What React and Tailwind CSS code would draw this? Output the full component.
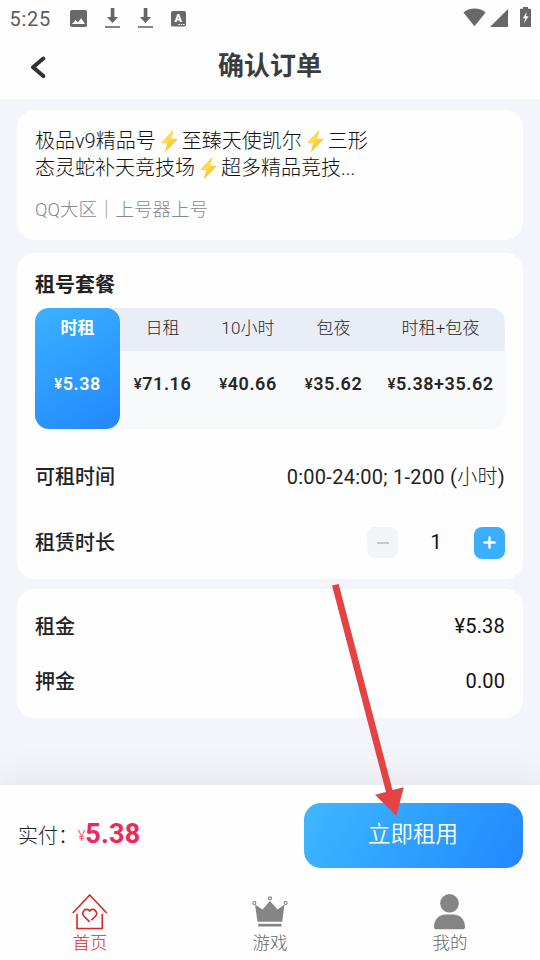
import React, { useState } from 'react';

const plans = [
    { name: '时租', price: '5.38', width: 'w-[85px]' },
    { name: '日租', price: '71.16', width: 'w-[85px]' },
    { name: '10小时', price: '40.66', width: 'w-[86px]' },
    { name: '包夜', price: '35.62', width: 'w-[85px]' },
    { name: '时租+包夜', price: '5.38+35.62', width: 'w-[129px]' },
];

function Bolt() {
    return (
        <svg viewBox="0 0 20 24" className="inline-block w-[19px] h-[24px] ml-[4px] mr-[3px] align-[-5px]">
            <defs>
                <linearGradient id="bolt" x1="0" y1="0" x2="0.6" y2="1">
                    <stop offset="0" stopColor="#ffc928" />
                    <stop offset="0.5" stopColor="#ffdc4e" />
                    <stop offset="1" stopColor="#f5b929" />
                </linearGradient>
            </defs>
            <path d="M13 1.2 1.6 13.3c-.4.5-.2 1 .5 1h5.6L5.4 22.5c-.2.8.3 1 .9.4L18 10.7c.5-.6.3-1.1-.5-1.1h-5.6l2.2-7.9c.2-.8-.5-1.1-1.1-.5Z" fill="url(#bolt)" />
        </svg>
    );
}

function DownloadIcon() {
    return (
        <svg width="15" height="20" viewBox="0 0 15 20" fill="#666">
            <path d="M5.7 0h3.7v9H13l-5.5 6L2 9h3.7z" />
            <path d="M0 18.2h15v1.6H0z" />
        </svg>
    );
}

function StatusBar() {
    return (
        <div className="flex h-[36px] items-center pl-[9.5px] pr-[9.5px]">
            <span className="w-[60px] pt-[2px] text-[20px] tracking-[0.7px] text-[#5c5c5c]">5:25</span>
            <svg width="17" height="17" viewBox="0 0 17 17">
                <rect width="17" height="17" rx="2" fill="#686868" />
                <path d="M2 14l3.5-4 2.3 2.5 3.4-4.3L15 14z" fill="#fff" />
            </svg>
            <div className="ml-[18px]"><DownloadIcon /></div>
            <div className="ml-[18px]"><DownloadIcon /></div>
            <svg width="15" height="17" viewBox="0 0 15 17" className="ml-[18px]">
                <rect y="1" width="15" height="15.5" rx="1.8" fill="#686868" />
                <text x="7.3" y="12" textAnchor="middle" fontFamily="Roboto, sans-serif" fontWeight="900" fontSize="11" fill="#fff">A</text>
                <path d="M7.3 14.5h6.7" stroke="#fff" strokeWidth="1" strokeDasharray="1.6 .8" />
            </svg>
            <svg width="23" height="19" viewBox="0 0 23 19" className="mb-[2px] ml-auto" fill="#686868">
                <path d="M11.5 18.2.4 4.6C3.3 1.8 7.1.4 11.5.4s8.2 1.4 11.1 4.2z" />
            </svg>
            <svg width="18" height="18" viewBox="0 0 18 18" className="ml-[4px]" fill="#686868">
                <path d="M18 0v18H0z" />
            </svg>
            <svg width="11" height="20" viewBox="0 0 11 20" className="mb-[2px] ml-[12px]">
                <path d="M3 0h5v1.8h2c.6 0 1 .4 1 1V19c0 .6-.4 1-1 1H1c-.6 0-1-.4-1-1V2.8c0-.6.4-1 1-1h2z" fill="#686868" />
                <path d="M6.7 5 2.8 11.3h2.4L4 16.3 8.5 9.3H6z" fill="#fff" />
            </svg>
        </div>
    );
}

function Header() {
    return (
        <div className="relative flex h-[63px] items-center justify-center pb-[3px]">
            <button className="absolute left-[29px] top-[19px]">
                <svg width="17" height="24" viewBox="0 0 17 24" fill="none" stroke="#333" strokeWidth="4" strokeLinecap="round" strokeLinejoin="round">
                    <path d="M14.3 3.5 4 12.3l10.3 8.8" />
                </svg>
            </button>
            <h1 className="text-[26px] font-bold leading-none text-[#3c3c3c]">确认订单</h1>
        </div>
    );
}

function PlanTable() {
    return (
        <div className="mt-[9px] flex h-[121px] rounded-[14px] bg-linear-to-b from-[#e9edf6] from-[35.5%] to-[#f8f9fb] to-[35.5%]">
            {plans.map((plan, i) => (
                <div
                    key={plan.name}
                    className={`${plan.width} flex h-full shrink-0 flex-col items-center ${
                        i === 0
                            ? 'rounded-[14px] bg-linear-150 from-[#3cb1ff] to-[#2387ff] text-white'
                            : 'text-[#262626]'
                    }`}
                >
                    <span className={`mt-[8px] text-[17px] leading-[24px] ${i === 0 ? 'font-bold' : 'font-light tracking-[0.1px]'}`}>{plan.name}</span>
                    <span className="mt-[32px] whitespace-nowrap text-[18px] font-semibold leading-[24px] tracking-[0.55px]">
                        <span className="relative top-[-1px] text-[15px] font-medium">¥</span>{plan.price}
                    </span>
                </div>
            ))}
        </div>
    );
}

function Stepper() {
    const [hours, setHours] = useState(1);
    return (
        <div className="flex items-center pb-[1px]">
            <button className="flex size-[31px] items-center justify-center rounded-[8px] bg-[#f3f4f8]" onClick={() => setHours(Math.max(1, hours - 1))}>
                <span className="h-[2px] w-[12px] bg-[#c6c7cb]" />
            </button>
            <span className="w-[76px] pb-[1px] text-center text-[20px] text-[#111]">{hours}</span>
            <button className="flex h-[32px] w-[31px] items-center justify-center rounded-[8px] bg-[#3baeff]" onClick={() => setHours(hours + 1)}>
                <svg width="13" height="13" viewBox="0 0 13 13" stroke="#fff" strokeWidth="2.4" strokeLinecap="round">
                    <path d="M6.5 1.5v10M1.5 6.5h10" />
                </svg>
            </button>
        </div>
    );
}

function HomeIcon() {
    return (
        <svg width="36" height="36" viewBox="0 0 36 36" fill="none" stroke="#dc2626" strokeWidth="1.6">
            <path d="M.8 19 17.7 1l17 18" />
            <path d="M5 20v14.5h25.3V20" />
            <path d="M17.700 27.800 12 22.300c-1.400-1.700-1.300-4.200 0-5.700 1.700-1.800 4.400-1.600 5.700.4 1.300-2 4-2.200 5.700-.4 1.400 1.500 1.500 4 0 5.700l-4 4" />
        </svg>
    );
}

function CrownIcon() {
    return (
        <svg width="36" height="36" viewBox="0 0 36 36" fill="#858585">
            <path d="M3 10.500 10.500 15.500 18 7l7.500 8.500 7-5-2.300 17.300H5.500z" />
            <path d="M6.200 29.800h23.300v2.700H6.200z" />
            <g fill="none" stroke="#858585" strokeWidth="1.2">
                <circle cx="2.300" cy="9" r="1.500" />
                <circle cx="18" cy="4.300" r="1.500" />
                <circle cx="33.700" cy="9" r="1.500" />
            </g>
        </svg>
    );
}

function UserIcon() {
    return (
        <svg width="36" height="36" viewBox="0 0 36 36" fill="#858585">
            <circle cx="17.500" cy="9.300" r="9.300" />
            <path d="M2 33c0-7.500 5-12.500 11.500-12.500h8C28 20.500 33 25.500 33 33c0 1.500-.8 2.300-2.500 2.300h-26C2.800 35.300 2 34.500 2 33Z" />
        </svg>
    );
}

function App() {
    return (
        <div className="relative flex h-[960px] w-[540px] flex-col overflow-hidden bg-[#f3f5fa] font-['Roboto','Noto_Sans_CJK_SC',sans-serif] text-[#222]">
            <header className="h-[99px] shrink-0 bg-[#fefefe]">
                <StatusBar />
                <Header />
            </header>

            <main className="flex flex-1 flex-col px-[17px] pt-[11px]">
                <section className="h-[130px] rounded-[18px] bg-[#fefefe] px-[18px] pt-[18px]">
                    <div className="whitespace-nowrap text-[20px] font-light leading-[27px] text-[#111]">
                        <p>极品v9精品号<Bolt />至臻天使凯尔<Bolt />三形</p>
                        <p>态灵蛇补天竞技场<Bolt />超多精品竞技...</p>
                    </div>
                    <p className="mt-[16px] text-[18.5px] font-light leading-[24px] text-[#858890]">QQ大区｜上号器上号</p>
                </section>

                <section className="mt-[13px] h-[326px] rounded-[18px] bg-[#fefefe] px-[18px] pt-[18px]">
                    <h2 className="text-[20px] font-bold leading-[28px]">租号套餐</h2>
                    <PlanTable />
                    <div className="mt-[32px] flex h-[32px] items-center justify-between">
                        <span className="text-[20px] font-medium">可租时间</span>
                        <span className="pb-[1px] text-[20px] tracking-[0.27px]">0:00-24:00; 1-200 (<span className="font-light">小时</span>)</span>
                    </div>
                    <div className="mt-[34px] flex h-[32px] items-center justify-between">
                        <span className="text-[20px] font-medium">租赁时长</span>
                        <Stepper />
                    </div>
                </section>

                <section className="mt-[10px] h-[129px] rounded-[18px] bg-[#fefefe] px-[18px] pt-[22px] text-[20px]">
                    <div className="flex h-[32px] items-center justify-between">
                        <span className="font-medium">租金</span>
                        <span className="pb-[2px] tracking-[0.2px] text-[#111]">¥5.38</span>
                    </div>
                    <div className="mt-[23px] flex h-[32px] items-center justify-between">
                        <span className="font-medium">押金</span>
                        <span className="pb-[2px] tracking-[0.1px] text-[#111]">0.00</span>
                    </div>
                </section>
            </main>

            <div className="flex h-[100px] shrink-0 items-center justify-between bg-[#fefefe] pl-[18px] pr-[17px] shadow-[0_-4px_40px_rgba(0,0,0,0.08)]">
                <div className="flex items-baseline pt-[2px]">
                    <span className="text-[20px] font-light">实付：</span>
                    <span className="relative top-[-2px] text-[14px] font-light text-[#e5294f]">¥</span>
                    <span className="text-[27px] font-bold leading-none tracking-[0.2px] text-[#f62459]">5.38</span>
                </div>
                <button className="h-[65px] w-[219px] rounded-[17px] bg-linear-120 from-[#3fb8ff] to-[#2387ff] pr-[1px] text-[22.5px] font-[350] text-white">
                    立即租用
                </button>
            </div>

            <nav className="flex h-[75px] shrink-0 bg-[#fefefe] pt-[9px] text-[17.5px] font-light text-[#666]">
                <div className="flex flex-1 flex-col items-center text-[#dc2626]">
                    <HomeIcon />
                    <span className="leading-[27px]">首页</span>
                </div>
                <div className="flex flex-1 flex-col items-center">
                    <CrownIcon />
                    <span className="leading-[27px]">游戏</span>
                </div>
                <div className="flex flex-1 flex-col items-center">
                    <UserIcon />
                    <span className="leading-[27px]">我的</span>
                </div>
            </nav>

            {/* pointer to the rent button */}
            <svg className="pointer-events-none absolute left-[330px] top-[580px]" width="80" height="240" viewBox="0 0 80 240" fill="#e54343">
                <path d="M2 5.6 8.700 4 62.500 210l11.300-2.800L66.300 236 45 214.700l11-2.700z" />
            </svg>
        </div>
    );
}

export default App;
